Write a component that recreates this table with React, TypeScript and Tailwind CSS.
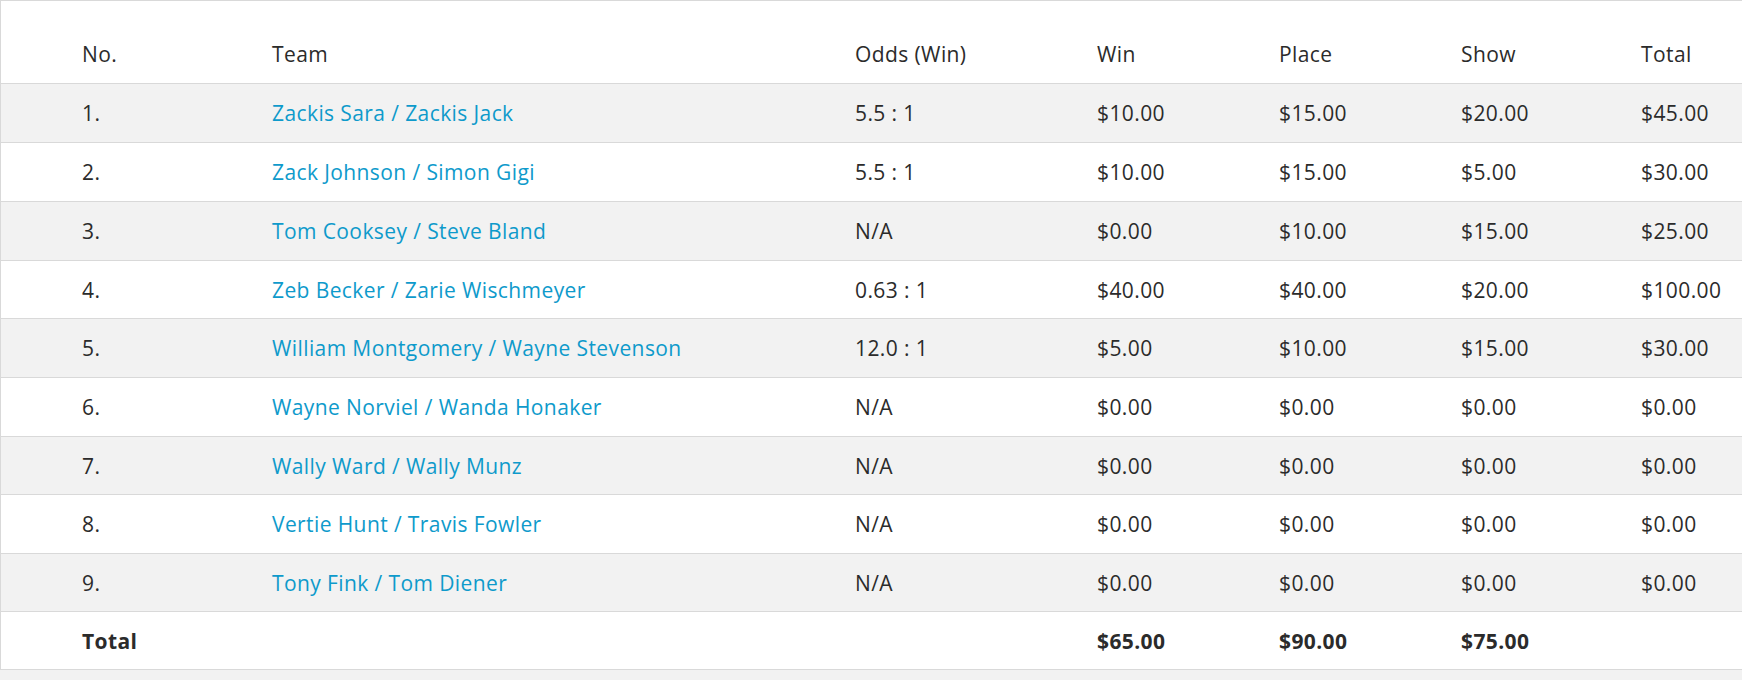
import React from "react";

const rows = [
  ["1.", "Zackis Sara / Zackis Jack", "5.5 : 1", "$10.00", "$15.00", "$20.00", "$45.00"],
  ["2.", "Zack Johnson / Simon Gigi", "5.5 : 1", "$10.00", "$15.00", "$5.00", "$30.00"],
  ["3.", "Tom Cooksey / Steve Bland", "N/A", "$0.00", "$10.00", "$15.00", "$25.00"],
  ["4.", "Zeb Becker / Zarie Wischmeyer", "0.63 : 1", "$40.00", "$40.00", "$20.00", "$100.00"],
  ["5.", "William Montgomery / Wayne Stevenson", "12.0 : 1", "$5.00", "$10.00", "$15.00", "$30.00"],
  ["6.", "Wayne Norviel / Wanda Honaker", "N/A", "$0.00", "$0.00", "$0.00", "$0.00"],
  ["7.", "Wally Ward / Wally Munz", "N/A", "$0.00", "$0.00", "$0.00", "$0.00"],
  ["8.", "Vertie Hunt / Travis Fowler", "N/A", "$0.00", "$0.00", "$0.00", "$0.00"],
  ["9.", "Tony Fink / Tom Diener", "N/A", "$0.00", "$0.00", "$0.00", "$0.00"],
];

const heights = ["h-[59px]", "h-[59px]", "h-[59px]", "h-[58px]", "h-[59px]", "h-[59px]", "h-[58px]", "h-[59px]", "h-[58px]"];

const grid = "grid grid-cols-[271px_583px_242px_182px_182px_180px_1fr]";

export default function App() {
  return (
    <div className="min-h-[680px] w-[1742px] bg-[#f2f2f2] text-[21px] leading-[26px] tracking-[0.4px] text-[#2b2b2b] [font-family:'Open_Sans','Noto_Sans',sans-serif]">
      <div className="border-l border-t border-[#d9d9d9] bg-white">
        <div className={`${grid} h-[83px] items-end border-b border-[#d9d9d9] pb-[16px]`}>
          <div className="pl-[81px]">No.</div>
          <div>Team</div>
          <div>Odds (Win)</div>
          <div>Win</div>
          <div>Place</div>
          <div>Show</div>
          <div>Total</div>
        </div>
        {rows.map((r, i) => (
          <div
            key={i}
            className={`${grid} ${heights[i]} items-center border-b border-[#d9d9d9] ${i % 2 === 0 ? "bg-[#f2f2f2]" : "bg-white"}`}
          >
            <div className="pl-[81px]">{r[0]}</div>
            <div className="text-[#0e9acb]">{r[1]}</div>
            <div>{r[2]}</div>
            <div>{r[3]}</div>
            <div>{r[4]}</div>
            <div>{r[5]}</div>
            <div>{r[6]}</div>
          </div>
        ))}
        <div className={`${grid} h-[58px] items-center border-b border-[#d9d9d9] bg-white font-bold`}>
          <div className="pl-[81px]">Total</div>
          <div></div>
          <div></div>
          <div>$65.00</div>
          <div>$90.00</div>
          <div>$75.00</div>
          <div></div>
        </div>
      </div>
    </div>
  );
}
